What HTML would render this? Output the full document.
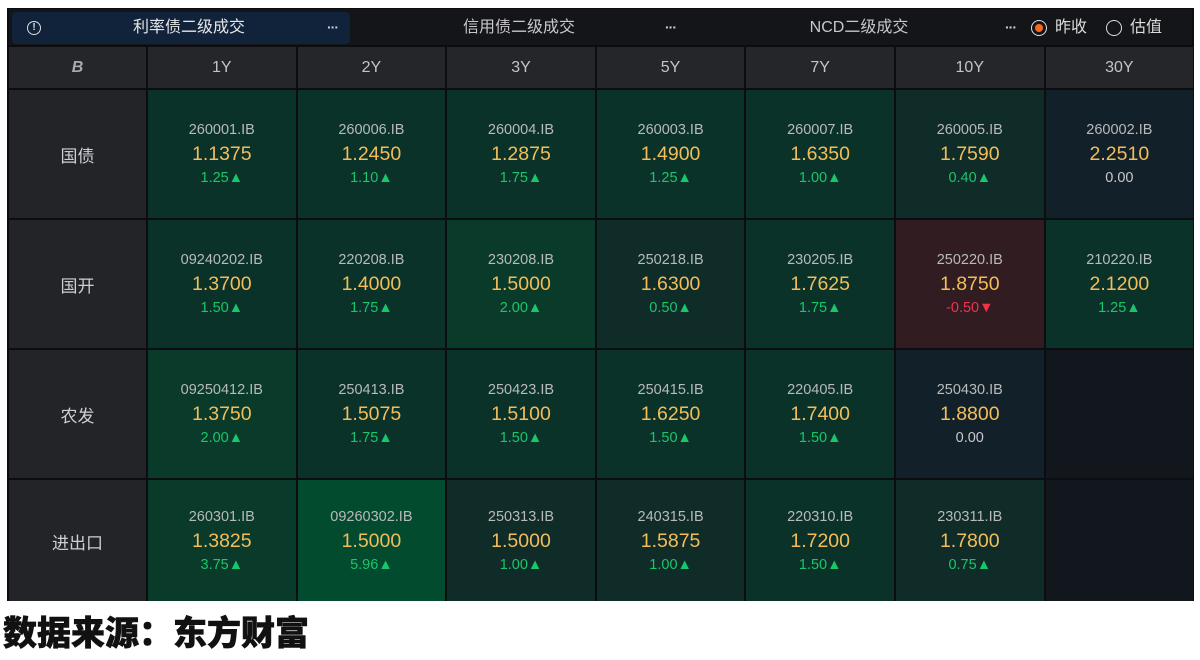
<!DOCTYPE html><html><head><meta charset="utf-8"><style>
*{margin:0;padding:0;box-sizing:border-box}
body{width:1200px;height:660px;background:#fff;position:relative;overflow:hidden;font-family:"Liberation Sans","Noto Sans CJK SC",sans-serif}
.panel{position:absolute;left:7px;top:8px;width:1187px;height:593px;background:#0c0d10;overflow:hidden}
.tabs{position:absolute;left:2px;top:1px;width:1183px;height:36px;background:#141519}
.tab{position:absolute;top:3px;height:32px;color:#c8c8cc;font-size:16px;line-height:32px;text-align:center}
.dots{position:absolute;top:3px;height:32px;line-height:30px;color:#ccc;font-size:14px;font-weight:bold;letter-spacing:-1px}
.grid{position:absolute;left:2px;top:39px;display:grid;grid-template-columns:137px repeat(7,147.6px);grid-template-rows:41px 128px 128px 128px 128px;gap:2px}
.h{background:#25262a;color:#c4c4c8;font-size:16px;display:flex;align-items:center;justify-content:center}
.l{background:#232428;color:#cfcfd3;font-size:17px;display:flex;align-items:center;justify-content:center}
.c{display:flex;flex-direction:column;align-items:center;justify-content:center;background:#0b3229}
.c .a{color:#b8babc;font-size:14.5px;line-height:21px}
.c .p{color:#f3bd5a;font-size:19.5px;line-height:27px}
.c .d{color:#19c66b;font-size:14.5px;line-height:21px}
.c .z{color:#c8c8c8}
.c .r{color:#f0324a}
.g2{background:#0a3a2a}.g3{background:#034b2f}.g0{background:#0f2c28}.dk{background:#12202a}.e{background:#12171e}.rd{background:#311c22}
.src{position:absolute;left:3px;top:606px;font-size:34px;font-weight:900;color:#111;font-family:"Noto Sans CJK SC",sans-serif;-webkit-text-stroke:0.6px #111}
</style></head><body>
<div class="panel">
<div class="tabs">
<div class="tab" style="left:3px;width:338px;background:#10233a;border-radius:4px"></div>
<div style="position:absolute;left:18px;top:12px;width:14px;height:14px;border:1.5px solid #ddd;border-radius:50%;color:#ddd;font-size:10px;line-height:11px;text-align:center;font-weight:bold">!</div>
<div class="tab" style="left:100px;width:160px;color:#e6e6e8">利率债二级成交</div>
<div class="dots" style="left:318px">···</div>
<div class="tab" style="left:430px;width:160px">信用债二级成交</div>
<div class="dots" style="left:656px">···</div>
<div class="tab" style="left:770px;width:160px">NCD二级成交</div>
<div class="dots" style="left:996px">···</div>
<div style="position:absolute;left:1022px;top:11px;width:16px;height:16px;border:1.5px solid #ddd;border-radius:50%"><div style="margin:2.5px;width:8px;height:8px;border-radius:50%;background:#f26a1b"></div></div>
<div class="tab" style="left:1044px;width:36px;color:#ddd">昨收</div>
<div style="position:absolute;left:1097px;top:11px;width:16px;height:16px;border:1.5px solid #ddd;border-radius:50%"></div>
<div class="tab" style="left:1119px;width:36px;color:#ddd">估值</div>
</div>
<div class="grid">
<div class="h" style="font-weight:bold;font-style:italic;color:#aaa">B</div><div class="h">1Y</div><div class="h">2Y</div><div class="h">3Y</div><div class="h">5Y</div><div class="h">7Y</div><div class="h">10Y</div><div class="h">30Y</div>

<div class="l">国债</div>
<div class="c"><span class="a">260001.IB</span><span class="p">1.1375</span><span class="d">1.25▲</span></div>
<div class="c"><span class="a">260006.IB</span><span class="p">1.2450</span><span class="d">1.10▲</span></div>
<div class="c"><span class="a">260004.IB</span><span class="p">1.2875</span><span class="d">1.75▲</span></div>
<div class="c"><span class="a">260003.IB</span><span class="p">1.4900</span><span class="d">1.25▲</span></div>
<div class="c"><span class="a">260007.IB</span><span class="p">1.6350</span><span class="d">1.00▲</span></div>
<div class="c g0"><span class="a">260005.IB</span><span class="p">1.7590</span><span class="d">0.40▲</span></div>
<div class="c dk"><span class="a">260002.IB</span><span class="p">2.2510</span><span class="d z">0.00</span></div>

<div class="l">国开</div>
<div class="c"><span class="a">09240202.IB</span><span class="p">1.3700</span><span class="d">1.50▲</span></div>
<div class="c"><span class="a">220208.IB</span><span class="p">1.4000</span><span class="d">1.75▲</span></div>
<div class="c g2"><span class="a">230208.IB</span><span class="p">1.5000</span><span class="d">2.00▲</span></div>
<div class="c g0"><span class="a">250218.IB</span><span class="p">1.6300</span><span class="d">0.50▲</span></div>
<div class="c"><span class="a">230205.IB</span><span class="p">1.7625</span><span class="d">1.75▲</span></div>
<div class="c rd"><span class="a">250220.IB</span><span class="p">1.8750</span><span class="d r">-0.50▼</span></div>
<div class="c"><span class="a">210220.IB</span><span class="p">2.1200</span><span class="d">1.25▲</span></div>

<div class="l">农发</div>
<div class="c g2"><span class="a">09250412.IB</span><span class="p">1.3750</span><span class="d">2.00▲</span></div>
<div class="c"><span class="a">250413.IB</span><span class="p">1.5075</span><span class="d">1.75▲</span></div>
<div class="c"><span class="a">250423.IB</span><span class="p">1.5100</span><span class="d">1.50▲</span></div>
<div class="c"><span class="a">250415.IB</span><span class="p">1.6250</span><span class="d">1.50▲</span></div>
<div class="c"><span class="a">220405.IB</span><span class="p">1.7400</span><span class="d">1.50▲</span></div>
<div class="c dk"><span class="a">250430.IB</span><span class="p">1.8800</span><span class="d z">0.00</span></div>
<div class="c e"></div>

<div class="l" style="padding-bottom:6px">进出口</div>
<div class="c g2" style="padding-bottom:6px"><span class="a">260301.IB</span><span class="p">1.3825</span><span class="d">3.75▲</span></div>
<div class="c g3" style="padding-bottom:6px"><span class="a">09260302.IB</span><span class="p">1.5000</span><span class="d">5.96▲</span></div>
<div class="c g0" style="padding-bottom:6px"><span class="a">250313.IB</span><span class="p">1.5000</span><span class="d">1.00▲</span></div>
<div class="c g0" style="padding-bottom:6px"><span class="a">240315.IB</span><span class="p">1.5875</span><span class="d">1.00▲</span></div>
<div class="c" style="padding-bottom:6px"><span class="a">220310.IB</span><span class="p">1.7200</span><span class="d">1.50▲</span></div>
<div class="c g0" style="padding-bottom:6px"><span class="a">230311.IB</span><span class="p">1.7800</span><span class="d">0.75▲</span></div>
<div class="c e"></div>
</div>
</div>
<div class="src">数据来源：东方财富</div>
</body></html>
